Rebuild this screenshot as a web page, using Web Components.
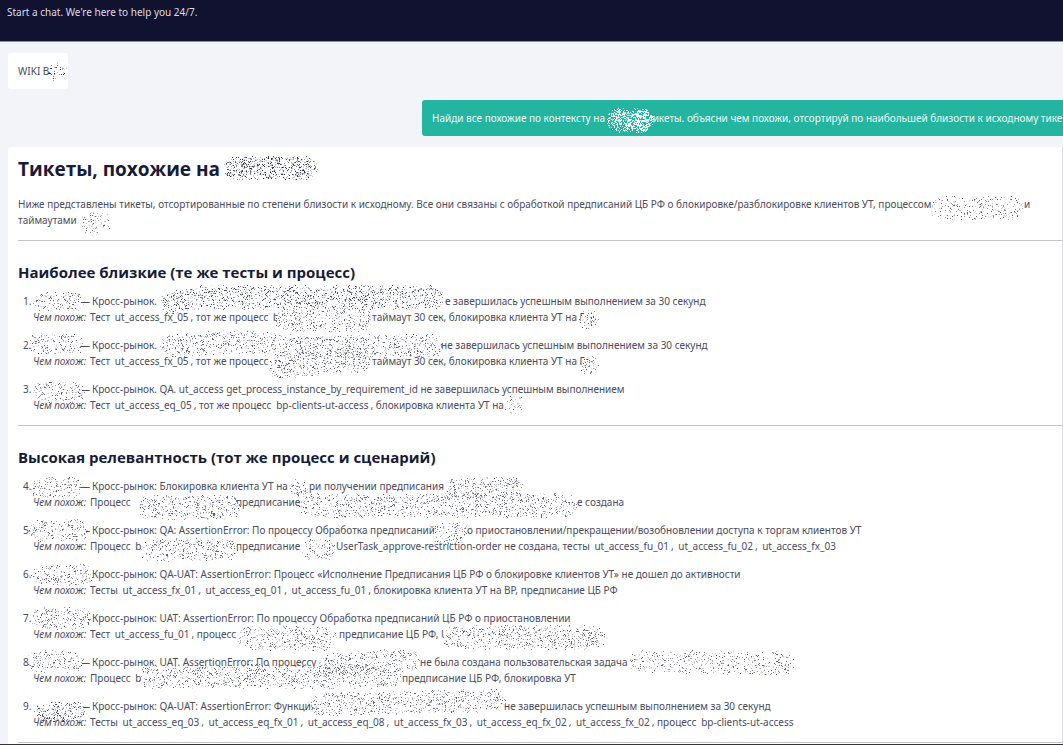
<!DOCTYPE html>
<html lang="ru">
<head>
<meta charset="utf-8">
<title>WIKI chat</title>
<style>
  body { margin: 0; background: #f3f4f9; color: #4b4c60; font: 10px/16px "Noto Sans", "Open Sans", sans-serif; }
  h1, h2, p { margin: 0; }
  h1, h2 { font-family: "Open Sans", "Noto Sans", sans-serif; font-weight: 700; color: #171b36; }
  h1 { font-size: 19px; line-height: 28px; }
  h2 { font-size: 15px; line-height: 26px; margin-bottom: 8px; }
  p { margin-top: 13px; }
  hr { border: 0; border-top: 1px solid #c4c5c9; margin: 12px -10px 18px 0; }
  hr.end { margin-bottom: 0; }
  code { font: inherit; margin: 0 2px; }
</style>
</head>
<body>
<chat-page>
  <chat-header slot="header">Start a chat. We're here to help you 24/7.</chat-header>
  <chat-bubble kind="source">WIKI B</chat-bubble>
  <chat-bubble kind="question"><text-run style="--span:216px">Найди все похожие по контексту на</text-run>тикеты. объясни чем похожи, отсортируй по наибольшей близости к исходному тике</chat-bubble>
  <chat-bubble kind="answer">
    <h1>Тикеты, похожие на</h1>
    <p><text-run style="--span:1006px">Ниже представлены тикеты, отсортированные по степени близости к исходному. Все они связаны с обработкой предписаний ЦБ РФ о блокировке/разблокировке клиентов УТ, процессом</text-run><text-run style="--span:8px">и</text-run> таймаутами</p>
    <hr>
    <h2>Наиболее близкие (те же тесты и процесс)</h2>
    <ticket-list>
      <ticket-item number="1"><text-run style="--span:353px">Кросс-рынок.</text-run>е завершилась успешным выполнением за 30 секунд
        <span slot="reason"><text-run style="--span:282px">Тест <code>ut_access_fx_05</code>, тот же процесс <code>b</code></text-run>таймаут 30 сек, блокировка клиента УТ на Г</span></ticket-item>
      <ticket-item number="2"><text-run style="--span:349px">Кросс-рынок.</text-run>не завершилась успешным выполнением за 30 секунд
        <span slot="reason"><text-run style="--span:282px">Тест <code>ut_access_fx_05</code>, тот же процесс</text-run>таймаут 30 сек, блокировка клиента УТ на Г</span></ticket-item>
      <ticket-item number="3">Кросс-рынок. QA. ut_access get_process_instance_by_requirement_id не завершилась успешным выполнением
        <span slot="reason">Тест <code>ut_access_eq_05</code>, тот же процесс <code>bp-clients-ut-access</code>, блокировка клиента УТ на</span></ticket-item>
    </ticket-list>
    <hr>
    <h2>Высокая релевантность (тот же процесс и сценарий)</h2>
    <ticket-list>
      <ticket-item number="4"><text-run style="--span:217px">Кросс-рынок: Блокировка клиента УТ на</text-run>ри получении предписания
        <span slot="reason"><text-run style="--span:146px">Процесс</text-run><text-run style="--span:341px">предписание</text-run>е создана</span></ticket-item>
      <ticket-item number="5"><text-run style="--span:375px">Кросс-рынок: QA: AssertionError: По процессу Обработка предписаний</text-run>о приостановлении/прекращении/возобновлении доступа к торгам клиентов УТ
        <span slot="reason"><text-run style="--span:146px">Процесс <code>b</code></text-run><text-run style="--span:100px">предписание</text-run>UserTask_approve-restriction-order не создана, тесты <code>ut_access_fu_01</code>, <code>ut_access_fu_02</code>, <code>ut_access_fx_03</code></span></ticket-item>
      <ticket-item number="6">Кросс-рынок: QA-UAT: AssertionError: Процесс «Исполнение Предписания ЦБ РФ о блокировке клиентов УТ» не дошел до активности
        <span slot="reason">Тесты <code>ut_access_fx_01</code>, <code>ut_access_eq_01</code>, <code>ut_access_fu_01</code>, блокировка клиента УТ на ВР, предписание ЦБ РФ</span></ticket-item>
      <ticket-item number="7">Кросс-рынок: UAT: AssertionError: По процессу Обработка предписаний ЦБ РФ о приостановлении
        <span slot="reason"><text-run style="--span:249px">Тест <code>ut_access_fu_01</code>, процесс</text-run>предписание ЦБ РФ, U</span></ticket-item>
      <ticket-item number="8"><text-run style="--span:328px">Кросс-рынок. UAT. AssertionError: По процессу</text-run>не была создана пользовательская задача "
        <span slot="reason"><text-run style="--span:312px">Процесс <code>b</code></text-run>предписание ЦБ РФ, блокировка УТ</span></ticket-item>
      <ticket-item number="9"><text-run style="--span:412px">Кросс-рынок: QA-UAT: AssertionError: Функция</text-run>не завершилась успешным выполнением за 30 секунд
        <span slot="reason">Тесты <code>ut_access_eq_03</code>, <code>ut_access_eq_fx_01</code>, <code>ut_access_eq_08</code>, <code>ut_access_fx_03</code>, <code>ut_access_eq_fx_02</code>, <code>ut_access_fx_02</code>, процесс <code>bp-clients-ut-access</code></span></ticket-item>
    </ticket-list>
    <hr class="end">
  </chat-bubble>
  <spray-layer slot="overlay"></spray-layer>
</chat-page>
<script>
const define = (name, html, setup) => customElements.define(name, class extends HTMLElement {
  constructor() {
    super();
    this.attachShadow({ mode: "open" }).innerHTML = html;
  }
  connectedCallback() { if (setup) setup(this, this.shadowRoot); }
});

define("chat-page", `<style>
  :host { display: block; position: relative; overflow: hidden; border-bottom: 1px solid #333338; }
  main { display: flex; flex-direction: column; gap: 11px; padding: 11px 0 0 8px; }
</style><slot name="header"></slot><main><slot></slot></main><slot name="overlay"></slot>`);

define("chat-header", `<style>
  :host { display: block; }
  header { box-sizing: border-box; height: 42px; padding: 4px 7px; background: #11122f; color: #dcdce6; border-bottom: 1px solid #8c8da8; }
</style><header><slot></slot></header>`);

define("chat-bubble", `<style>
  :host { display: block; box-sizing: border-box; padding: 10px; border-radius: 3px; background: #fff; }
  :host([kind=source]) { align-self: flex-start; min-width: 60px; }
  :host([kind=question]) { margin-left: 414px; background: #23b5a0; color: #eefaf8; white-space: nowrap; border-radius: 3px 0 0 3px; }
  :host([kind=answer]) { padding: 8px 10px 1px; border-radius: 3px 0 0 0; border-right: 1px solid #dcdde3; }
</style><slot></slot>`);

define("text-run", `<style>
  :host { display: inline-block; width: var(--span); white-space: nowrap; }
</style><slot></slot>`);

define("ticket-list", `<style>
  :host { display: flex; flex-direction: column; gap: 12px; }
</style><slot></slot>`, el => el.setAttribute("role", "list"));

define("ticket-item", `<style>
  :host { display: grid; grid-template-columns: 10px 1fr; padding-left: 5px; white-space: nowrap; }
  .title { display: flex; padding-left: 47px; }
  .dash { width: 12px; flex: none; }
  .reason { grid-column: 2; display: flex; }
  em { width: 57px; flex: none; }
</style><span class="number"></span><div class="title"><span class="dash">—</span><span><slot></slot></span></div>
<div class="reason"><em>Чем похож:</em><slot name="reason"></slot></div>`, (el, root) => {
  el.setAttribute("role", "listitem");
  root.querySelector(".number").textContent = el.getAttribute("number") + ".";
});

// Spray strokes that hide private names: radius, share of inked pixels, ink, paper, then the points of the stroke.
const STROKES = [
  [10, .16, "#1b1c3a", "#fff", 57, 71],
  [12, .60, "#fff", "#23b5a0", 618, 120, 642, 120],
  [12, .32, "#171b36", "#fff", 235, 168, 306, 167],
  [12, .14, "", "#fff", 941, 208, 1012, 207],
  [11, .15, "", "#fff", 88, 223, 101, 222],
  [10, .20, "", "#fff", 42, 302, 74, 301],
  [12, .24, "#32345a", "#fff", 171, 303, 195, 297, 432, 297],
  [12, .20, "", "#fff", 286, 319, 361, 319],
  [10, .17, "", "#fff", 588, 319],
  [11, .18, "", "#fff", 38, 343, 73, 344],
  [12, .20, "", "#fff", 171, 345, 240, 341, 300, 347, 432, 345],
  [13, .20, "", "#fff", 280, 366, 362, 359],
  [10, .17, "", "#fff", 589, 365],
  [11, .18, "", "#fff", 42, 391, 74, 391],
  [11, .16, "", "#fff", 514, 404],
  [11, .20, "", "#fff", 41, 488, 70, 487],
  [10, .19, "", "#fff", 298, 488],
  [11, .22, "", "#fff", 455, 488, 512, 487],
  [12, .20, "", "#fff", 148, 507, 229, 507],
  [12, .20, "", "#fff", 310, 505, 565, 505],
  [11, .18, "", "#fff", 37, 530, 78, 530],
  [12, .18, "", "#fff", 443, 533, 457, 533],
  [12, .20, "", "#fff", 151, 550, 226, 549],
  [11, .18, "", "#fff", 312, 549, 325, 549],
  [11, .19, "", "#fff", 42, 575, 82, 574],
  [11, .19, "", "#fff", 41, 618, 80, 618],
  [12, .20, "", "#fff", 249, 638, 325, 638],
  [12, .21, "", "#fff", 453, 637, 595, 637],
  [11, .19, "", "#fff", 37, 661, 74, 661],
  [12, .20, "", "#fff", 329, 665, 410, 659],
  [12, .20, "", "#fff", 150, 676, 390, 676],
  [12, .15, "", "#fff", 640, 661, 782, 663],
  [10, .28, "#33345a", "#fff", 43, 712, 77, 711],
  [12, .20, "", "#fff", 321, 704, 495, 700]
];

define("spray-layer", `<style>
  :host { position: absolute; inset: 0; pointer-events: none; }
  svg { display: block; width: 100%; height: 100%; }
</style><svg aria-hidden="true" shape-rendering="crispEdges"></svg>`, (el, root) => {
  let seed = 7;
  const random = () => (seed = (seed * 16807) % 2147483647) / 2147483647;
  const distance = (x, y, p) => {
    let best = Math.hypot(x - p[0], y - p[1]);
    for (let i = 0; i + 3 < p.length; i += 2) {
      const dx = p[i + 2] - p[i], dy = p[i + 3] - p[i + 1];
      const t = Math.max(0, Math.min(1, ((x - p[i]) * dx + (y - p[i + 1]) * dy) / (dx * dx + dy * dy)));
      best = Math.min(best, Math.hypot(x - p[i] - t * dx, y - p[i + 1] - t * dy));
    }
    return best;
  };
  let papers = "", inks = "";
  for (const [radius, share, ink, paper, ...points] of STROKES) {
    const line = points.length > 2 ? points : [...points, points[0] + 1, points[1]];
    papers += `<polyline points="${line}" fill="none" stroke="${paper}" stroke-width="${radius * 2 - 6}" stroke-linecap="round" stroke-linejoin="round"/>`;
    const xs = points.filter((_, i) => i % 2 === 0), ys = points.filter((_, i) => i % 2);
    const shades = ["", "", "", ""];
    for (let y = Math.min(...ys) - radius; y <= Math.max(...ys) + radius; y++)
      for (let x = Math.min(...xs) - radius; x <= Math.max(...xs) + radius; x++) {
        const rim = radius - distance(x, y, points);
        if (rim >= 0 && random() < share * Math.min(1, .3 + rim / 5))
          shades[Math.floor(random() * 4)] += `M${x} ${y}h1v1h-1z`;
      }
    const opacity = ink === "#fff" ? [1, 1, 1, .7] : [.9, .6, .35, .2];
    shades.forEach((d, i) => inks += `<path d="${d}" fill="${ink || "#4f5068"}" opacity="${opacity[i]}"/>`);
  }
  root.querySelector("svg").innerHTML = papers + inks;
});
</script>
</body>
</html>
